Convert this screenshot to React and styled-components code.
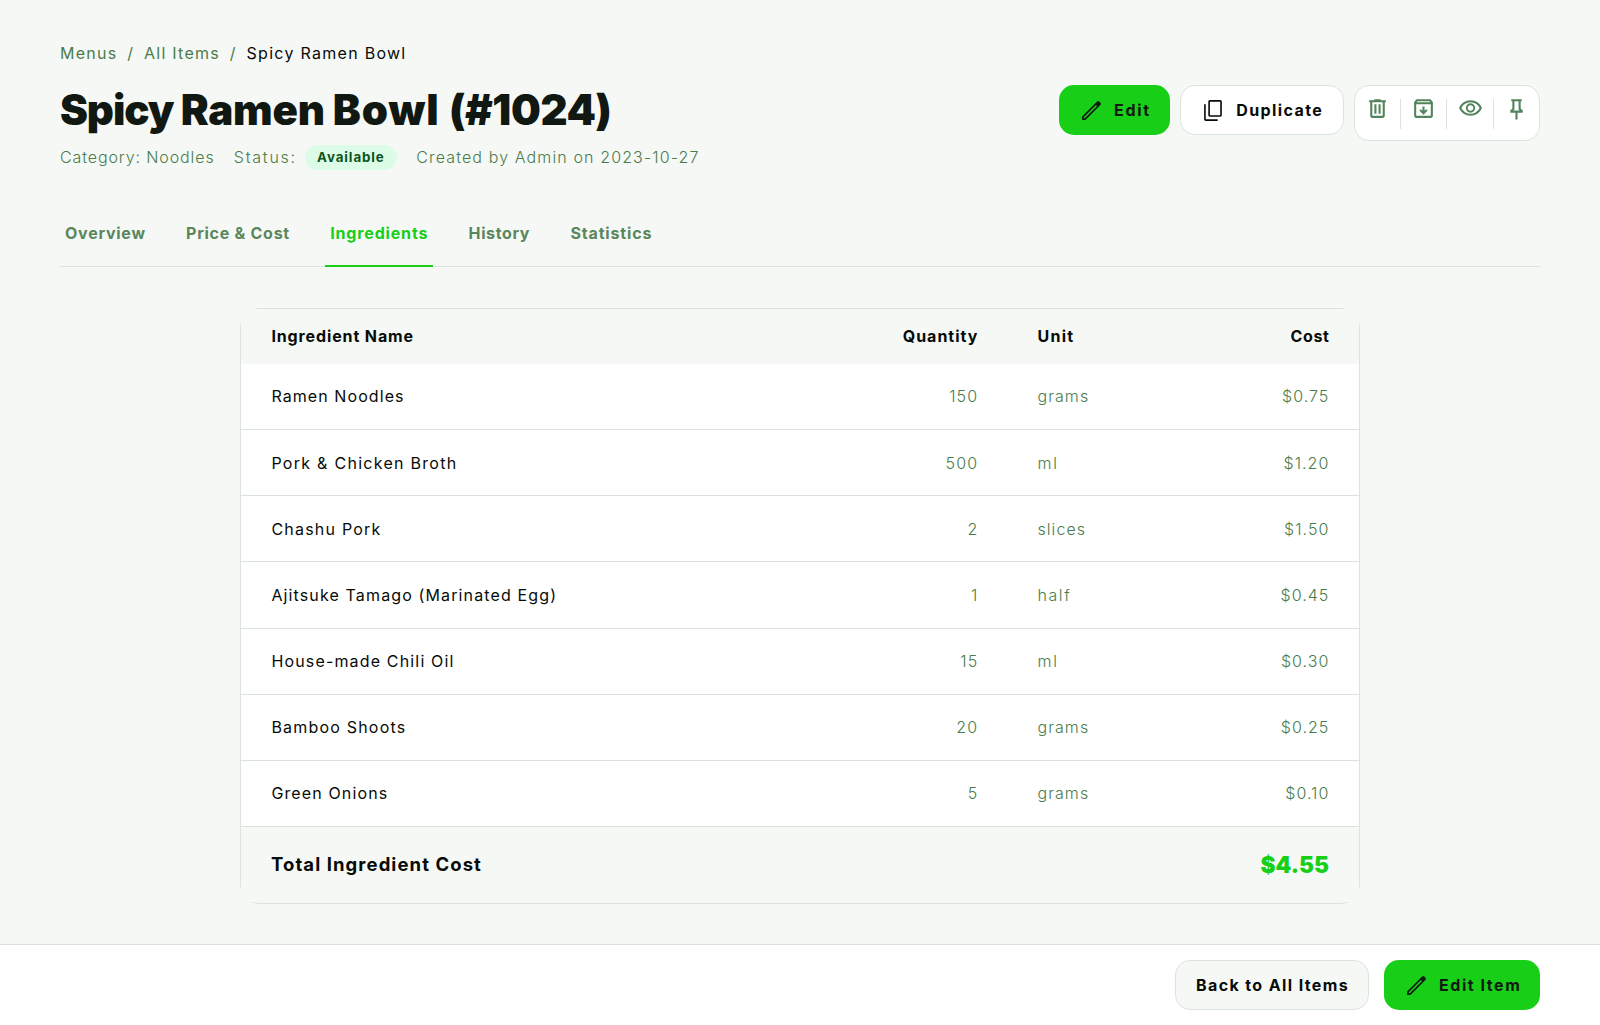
import React from "react";
import styled, { createGlobalStyle, css } from "styled-components";

const color = {
  page: "#f6f8f6",
  surface: "#ffffff",
  ink: "#111812",
  text: "#070b08",
  muted: "#4a7c4b",
  tab: "#5a865c",
  border: "#dbe4dc",
  primary: "#17cf17",
};

const GlobalStyle = createGlobalStyle`
  *, *::before, *::after { box-sizing: border-box; }
  body {
    margin: 0;
    background: ${color.page};
    color: ${color.text};
    font-family: Inter, "Open Sans", sans-serif;
    font-size: 16px;
    line-height: 25px;
  }
  button { font: inherit; color: inherit; margin: 0; cursor: pointer; }
`;

const Page = styled.div`
  display: flex;
  flex-direction: column;
  height: 1025px;
  overflow: hidden;
`;

const Content = styled.main`
  flex: 1;
  display: flex;
  flex-direction: column;
  padding: 40px 60px 0;
`;

const Track = styled.span`
  letter-spacing: ${(p) => p.$ls ?? 1.2}px;
  white-space: nowrap;
`;

const Breadcrumb = styled.nav`
  display: flex;
  gap: 9.8px;
  height: 26px;
  line-height: 26px;
  color: ${color.muted};
`;

const Current = styled(Track)`
  color: ${color.text};
`;

const Header = styled.header`
  display: flex;
  justify-content: space-between;
  align-items: flex-start;
  margin-top: 19px;
`;

const TitleBlock = styled.div`
  display: flex;
  flex-direction: column;
`;

const Title = styled.h1`
  margin: 0;
  height: 50px;
  font-size: 42px;
  line-height: 50px;
  font-weight: 900;
  color: ${color.ink};
  white-space: nowrap;
`;

const Meta = styled.div`
  display: flex;
  align-items: center;
  gap: 19.3px;
  height: 25px;
  margin-top: 10px;
  font-weight: 350;
  line-height: 27px;
  color: ${color.muted};
`;

const Status = styled.span`
  display: flex;
  align-items: center;
  gap: 7.8px;
`;

const Badge = styled.span`
  height: 25px;
  padding: 0 12.4px;
  border-radius: 13px;
  background: #dcfce7;
  color: #0a5420;
  font-size: 13.3px;
  font-weight: 700;
  line-height: 25px;
  letter-spacing: 0.91px;
`;

const Actions = styled.div`
  display: flex;
  align-items: flex-start;
  gap: 10.25px;
`;

const Button = styled.button`
  display: flex;
  align-items: center;
  gap: 10px;
  width: ${(p) => p.$width}px;
  height: 50px;
  padding: 0 0 0 20px;
  border: 0;
  border-radius: 15px;
  font-weight: 700;
  ${(p) =>
    p.$variant === "primary"
      ? css`
          background: ${color.primary};
          color: ${color.ink};
        `
      : css`
          background: ${p.$variant === "subtle" ? color.page : color.surface};
          border: 1px solid ${color.border};
        `}
`;

const IconGroup = styled.div`
  display: flex;
  align-items: flex-start;
  width: 186px;
  height: 56px;
  border: 1px solid ${color.border};
  border-radius: 15px;
  background: ${color.surface};
`;

const IconButton = styled.button`
  width: 45px;
  height: 45px;
  padding: 10px;
  border: 0;
  background: none;
  color: #52835a;
`;

const Divider = styled.span`
  width: 1px;
  height: 30px;
  margin: 13px 0.17px 0;
  background: ${color.border};
`;

const Svg = styled.svg`
  display: block;
  flex: none;
  width: 25px;
  height: 25px;
  fill: currentColor;
`;

const Tabs = styled.nav`
  display: flex;
  gap: 31px;
  height: 67px;
  margin-top: 30px;
  border-bottom: 1px solid ${color.border};
`;

const Tab = styled.button`
  height: 67px;
  padding: 1px 4.3px 0 5px;
  border: 0;
  border-bottom: 2px solid ${(p) => (p.$active ? color.primary : "transparent")};
  background: none;
  font-weight: 700;
  color: ${(p) => (p.$active ? color.primary : color.tab)};
`;

const Table = styled.section`
  width: 1120px;
  height: 596px;
  align-self: center;
  margin-top: 41px;
  border: 1px solid ${color.border};
  border-radius: 20px;
`;

const Row = styled.div`
  display: grid;
  grid-template-columns: 586px 180px 160px 192px;
  align-items: center;
  height: 66.2px;
  background: ${color.surface};
  border-bottom: 1px solid ${color.border};

  & > :last-child {
    padding-right: 29.6px;
  }
`;

const HeadRow = styled(Row)`
  height: 54.75px;
  background: ${color.page};
  border-bottom: 0;
  font-weight: 700;
`;

const TotalRow = styled.div`
  display: flex;
  align-items: center;
  justify-content: space-between;
  height: 75px;
  padding: 0 30px 0 30px;
  background: ${color.page};
`;

const Cell = styled.div`
  padding: 1px 28.6px 0 30.4px;
  text-align: ${(p) => (p.$end ? "right" : "left")};
  ${(p) => p.$muted && `color: ${color.muted}; font-weight: 350;`}
`;

const TotalLabel = styled(Track)`
  font-size: 18.5px;
  font-weight: 700;
`;

const TotalValue = styled(Track)`
  font-size: 22.5px;
  font-weight: 900;
  line-height: 28px;
  color: ${color.primary};
`;

const Footer = styled.footer`
  display: flex;
  justify-content: flex-end;
  gap: 15px;
  height: 81px;
  padding: 15px 60px 0;
  border-top: 1px solid ${color.border};
  background: ${color.surface};
`;

const paths = {
  edit: "M180-180h44l472-471-44-44-472 471v44Zm-60 60v-128l575-574q8-8 19-12.5t23-4.5q11 0 22 4.5t20 12.5l44 44q9 9 13 20t4 22q0 11-4.5 22.5T823-694L248-120H120Zm659-617-41-41 41 41Zm-105 64-22-22 44 44-22-22Z",
  copy: "M342-240q-25 0-43.500-18.500T280-302v-516q0-25 18.500-43.500T342-880h396q25 0 43.500 18.500T800-818v516q0 25-18.500 43.500T738-240H342Zm0-62h396v-516H342v516ZM182-80q-25 0-43.500-18.500T120-142v-578h62v578h458v62H182Z",
  trash: "M280-120q-33 0-56.5-23.5T200-200v-520h-40v-80h200v-40h240v40h200v80h-40v520q0 33-23.5 56.5T680-120H280Zm400-600H280v520h400v-520ZM360-280h80v-360h-80v360Zm160 0h80v-360h-80v360Z",
  archive: "m480-240 160-160-56-56-64 64v-168h-80v168l-64-64-56 56 160 160ZM200-640v440h560v-440H200Zm0 520q-33 0-56.5-23.5T120-200v-499q0-14 4.5-27t13.5-24l50-61q11-14 27.5-21.5T250-840h460q18 0 34.5 7.5T772-811l50 61q9 11 13.5 24t4.5 27v499q0 33-23.5 56.5T760-120H200Zm16-600h528l-34-40H250l-34 40Z",
  eye: "M480-320q75 0 127.5-52.5T660-500q0-75-52.5-127.5T480-680q-75 0-127.5 52.5T300-500q0 75 52.5 127.5T480-320Zm0-72q-45 0-76.5-31.5T372-500q0-45 31.5-76.5T480-608q45 0 76.5 31.5T588-500q0 45-31.5 76.5T480-392Zm0 192q-146 0-266-81.5T40-500q54-137 174-218.5T480-800q146 0 266 81.5T920-500q-54 137-174 218.5T480-200Zm0-80q113 0 207.5-59.5T832-500q-50-101-144.5-160.5T480-720q-113 0-207.5 59.5T128-500q50 101 144.5 160.5T480-280Z",
  pin: "m640-480 80 80v80H520v240l-40 40-40-40v-240H240v-80l80-80v-280h-40v-80h400v80h-40v280Zm-286 80h252l-46-46v-314H400v314l-46 46Z",
};

const Icon = ({ name }) => (
  <Svg viewBox="0 -960 960 960" aria-hidden="true">
    <path d={paths[name]} />
  </Svg>
);

const tabs = [
  ["Overview", 0.75],
  ["Price & Cost", 0.73],
  ["Ingredients", 0.84],
  ["History", 0.62],
  ["Statistics", 0.85],
];

const ingredients = [
  { name: "Ramen Noodles", ls: 1.08, qty: "150", unit: "grams", cost: "$0.75" },
  { name: "Pork & Chicken Broth", ls: 1.28, qty: "500", unit: "ml", unitLs: 2, cost: "$1.20" },
  { name: "Chashu Pork", ls: 1.22, qty: "2", unit: "slices", cost: "$1.50" },
  { name: "Ajitsuke Tamago (Marinated Egg)", ls: 1.13, qty: "1", unit: "half", unitLs: 1.6, cost: "$0.45" },
  { name: "House-made Chili Oil", ls: 1.16, qty: "15", unit: "ml", unitLs: 2, cost: "$0.30" },
  { name: "Bamboo Shoots", ls: 1.2, qty: "20", unit: "grams", cost: "$0.25" },
  { name: "Green Onions", ls: 1.13, qty: "5", unit: "grams", cost: "$0.10" },
];

const tools = ["trash", "archive", "eye", "pin"];

export default function App() {
  return (
    <Page>
      <GlobalStyle />
      <Content>
        <Breadcrumb>
          <Track $ls={1.25}>Menus</Track>
          <Track>/</Track>
          <Track $ls={1.26}>All Items</Track>
          <Track>/</Track>
          <Current $ls={1.28}>Spicy Ramen Bowl</Current>
        </Breadcrumb>
        <Header>
          <TitleBlock>
            <Title>
              <Track $ls={-1.1}>Spicy </Track>
              <Track $ls={-0.25}>Ramen </Track>
              <Track $ls={0.95}>Bowl </Track>
              <Track $ls={-0.4}>(#1024)</Track>
            </Title>
            <Meta>
              <Track $ls={0.89}>Category: Noodles</Track>
              <Status>
                <Track $ls={1.75}>Status:</Track>
                <Badge>Available</Badge>
              </Status>
              <Track $ls={1.12}>Created by Admin on 2023-10-27</Track>
            </Meta>
          </TitleBlock>
          <Actions>
            <Button $variant="primary" $width={111}>
              <Icon name="edit" />
              <Track $ls={1.7}>Edit</Track>
            </Button>
            <Button $width={163.5}>
              <Icon name="copy" />
              <Track $ls={1.4}>Duplicate</Track>
            </Button>
            <IconGroup>
              {tools.map((name, i) => (
                <React.Fragment key={name}>
                  {i > 0 && <Divider />}
                  <IconButton aria-label={name}>
                    <Icon name={name} />
                  </IconButton>
                </React.Fragment>
              ))}
            </IconGroup>
          </Actions>
        </Header>
        <Tabs>
          {tabs.map(([label, ls]) => (
            <Tab key={label} $active={label === "Ingredients"}>
              <Track $ls={ls}>{label}</Track>
            </Tab>
          ))}
        </Tabs>
        <Table>
          <HeadRow>
            <Cell><Track $ls={0.88}>Ingredient Name</Track></Cell>
            <Cell $end><Track $ls={1}>Quantity</Track></Cell>
            <Cell><Track $ls={1.3}>Unit</Track></Cell>
            <Cell $end><Track $ls={0.6}>Cost</Track></Cell>
          </HeadRow>
          {ingredients.map((item) => (
            <Row key={item.name}>
              <Cell><Track $ls={item.ls}>{item.name}</Track></Cell>
              <Cell $end $muted><Track>{item.qty}</Track></Cell>
              <Cell $muted><Track $ls={item.unitLs ?? 1.1}>{item.unit}</Track></Cell>
              <Cell $end $muted><Track $ls={1.05}>{item.cost}</Track></Cell>
            </Row>
          ))}
          <TotalRow>
            <TotalLabel $ls={1.08}>Total Ingredient Cost</TotalLabel>
            <TotalValue $ls={0}>$4.55</TotalValue>
          </TotalRow>
        </Table>
      </Content>
      <Footer>
        <Button $variant="subtle" $width={194}>
          <Track $ls={1.38}>Back to All Items</Track>
        </Button>
        <Button $variant="primary" $width={156}>
          <Icon name="edit" />
          <Track $ls={1.55}>Edit Item</Track>
        </Button>
      </Footer>
    </Page>
  );
}
